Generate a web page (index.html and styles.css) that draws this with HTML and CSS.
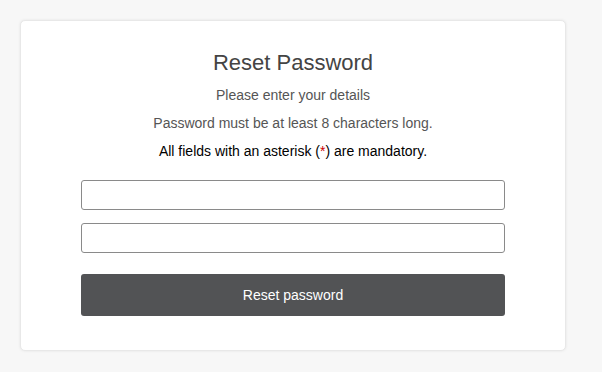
FILE: index.html
```html
<!DOCTYPE html>
<html lang="en">
<head>
<meta charset="utf-8">
<title>Reset Password</title>
<link rel="stylesheet" href="styles.css">
</head>
<body>
<div class="page">
  <div class="card">
    <h1 class="title">Reset Password</h1>
    <p class="info">Please enter your details</p>
    <p class="info">Password must be at least 8 characters long.</p>
    <p class="note">All fields with an asterisk (<span class="req">*</span>) are mandatory.</p>
    <form class="form">
      <input class="field" type="password" aria-label="New password">
      <input class="field" type="password" aria-label="Confirm password">
      <button class="btn" type="button">Reset password</button>
    </form>
  </div>
</div>
</body>
</html>
```

FILE: styles.css
```css
html, body {
  margin: 0;
  padding: 0;
  background: #ffffff;
  font-family: "Liberation Sans", Arial, sans-serif;
}
.page {
  height: 372px;
  box-sizing: border-box;
  background: #f7f7f7;
  padding: 20px 0 0 20px;
}
.card {
  width: 546px;
  height: 331px;
  box-sizing: border-box;
  background: #ffffff;
  border: 1px solid #e8e8e8;
  border-radius: 5px;
  box-shadow: 0 0 3px rgba(0, 0, 0, 0.08);
  padding-top: 28px;
  display: flex;
  flex-direction: column;
  align-items: center;
}
.title {
  margin: 0 0 4px;
  font-size: 22px;
  line-height: 28px;
  font-weight: normal;
  color: #444444;
}
.info {
  margin: 0;
  font-size: 14px;
  line-height: 28px;
  color: #555555;
}
.note {
  margin: 0;
  font-size: 14px;
  line-height: 29px;
  color: #000000;
}
.req {
  color: #cc0000;
}
.form {
  margin-top: 14px;
  width: 424px;
  display: flex;
  flex-direction: column;
}
.field {
  height: 30px;
  box-sizing: border-box;
  margin: 0 0 13px;
  border: 1px solid #8a8a8a;
  border-radius: 3px;
  background: #ffffff;
  padding: 0 8px;
  font: inherit;
}
.field + .field {
  margin-bottom: 21px;
}
.btn {
  height: 42px;
  border: none;
  border-radius: 3px;
  background: #525355;
  color: #ffffff;
  font-family: "Liberation Sans", Arial, sans-serif;
  font-size: 14px;
  padding: 0;
}
```
